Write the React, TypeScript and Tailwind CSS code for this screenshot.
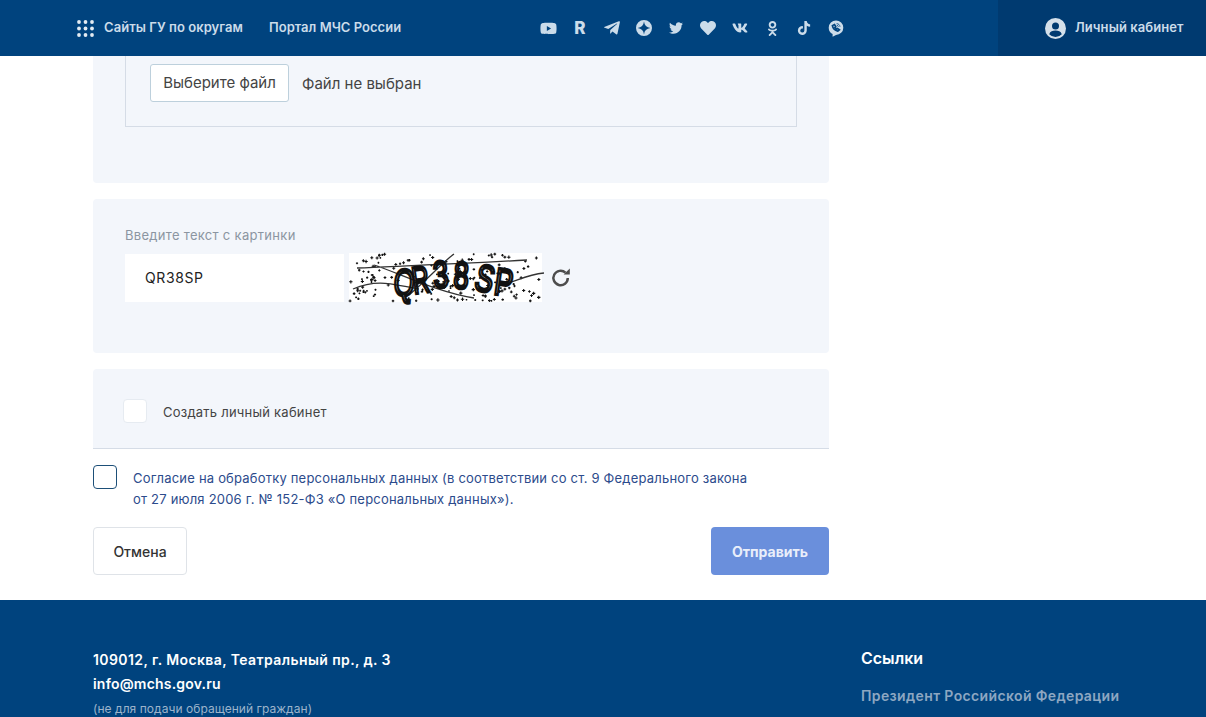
import React from "react";
import { FaYoutube, FaTelegramPlane, FaTwitter, FaHeart, FaVk, FaOdnoklassniki, FaTiktok } from "react-icons/fa";

function Grid() {
  const dots = [];
  for (let r = 0; r < 3; r++) for (let c = 0; c < 3; c++) dots.push(<circle key={`${r}${c}`} cx={2 + c * 6.5} cy={2 + r * 6.5} r={1.9} fill="#e3ebf2" />);
  return <svg width="17" height="17" viewBox="0 0 17 17">{dots}</svg>;
}

function Dzen() {
  return (
    <svg width="16" height="16" viewBox="0 0 16 16">
      <path fillRule="evenodd" fill="currentColor" d="M8 0a8 8 0 1 0 0 16A8 8 0 0 0 8 0Zm0 1.6C8.4 5.4 10.6 7.6 14.4 8 10.6 8.4 8.4 10.6 8 14.4 7.6 10.6 5.4 8.4 1.6 8 5.4 7.6 7.6 5.4 8 1.6Z" />
    </svg>
  );
}

function ViberBubble() {
  return (
    <svg width="16" height="17" viewBox="0 0 16 17">
      <path fill="currentColor" d="M8 .5a7.3 7.3 0 0 1 7.3 7.2A7.3 7.3 0 0 1 8 15l-3.4 1.8V14A7.2 7.2 0 0 1 .7 7.7 7.3 7.3 0 0 1 8 .5Z" />
      <path fill="none" stroke="#00437e" strokeWidth="1.7" d="M4.4 5.6c.5 2.7 2.4 4.8 5.4 5.5l1.6-1.3-1.9-1.3-1 .6-1.5-1.7.7-1-1.2-1.9Z" />
      <path fill="none" stroke="#00437e" strokeWidth="0.8" d="M8.6 3.6c2 .1 3.2 1.3 3.4 3.2M8.8 5.2c.9.1 1.5.7 1.6 1.6" />
    </svg>
  );
}

function Refresh() {
  return (
    <svg width="22" height="22" viewBox="0 0 22 22" fill="none">
      <path d="M17.8 11a7.2 7.2 0 1 1-2.3-5.3" stroke="#4d4d4d" strokeWidth="2.5" />
      <path d="M13.6 7.6h6.2V1.6Z" fill="#4d4d4d" />
    </svg>
  );
}

const letters = [
  { c: "Q", x: 44, y: 42, r: 4, sx: 0.7 },
  { c: "R", x: 65, y: 41, r: -8, sx: 0.62 },
  { c: "3", x: 85, y: 35, r: -4, sx: 0.72 },
  { c: "8", x: 104, y: 35, r: 3, sx: 0.72 },
  { c: "S", x: 124, y: 36, r: 14, sx: 0.72 },
  { c: "P", x: 144, y: 41, r: 8, sx: 0.72 },
];

function Captcha() {
  let seed = 38;
  const rnd = () => {
    seed = (seed * 16807) % 2147483647;
    return seed / 2147483647;
  };
  const noise = [];
  for (let i = 0; i < 175; i++) {
    const x = rnd() * 190 + 1;
    const y = rnd() * 47 + 1;
    const s = 0.8 + rnd() * 0.9;
    noise.push(<path key={i} d={`M${x - s} ${y}H${x + s}M${x} ${y - s}V${y + s}`} stroke="#111" strokeWidth="1.1" />);
  }
  return (
    <svg width="193" height="49" viewBox="0 0 193 49" className="overflow-visible bg-white">
      {noise}
      <path d="M8 15C50 13 90 12 178 7M4 36C30 25 45 32 70 36M25 12C50 20 90 40 125 45M60 42C80 25 95 8 105 1M150 32C165 30 175 22 195 20" stroke="#333" strokeWidth="1.3" fill="none" />
      {letters.map((l) => (
        <text
          key={l.c}
          transform={`translate(${l.x} ${l.y}) rotate(${l.r}) scale(${l.sx} 1)`}
          fontFamily="'Liberation Sans', sans-serif"
          fontSize="38"
          fill="none"
          stroke="#111"
          strokeWidth="3"
        >
          {l.c}
        </text>
      ))}
    </svg>
  );
}

const social = [
  <FaYoutube size={17} />,
  <span className="text-[17px] font-extrabold leading-none">R</span>,
  <FaTelegramPlane size={18} />,
  <Dzen />,
  <FaTwitter size={14} />,
  <FaHeart size={16} />,
  <FaVk size={16} />,
  <FaOdnoklassniki size={15} />,
  <FaTiktok size={14} />,
  <ViberBubble />,
];

export default function App() {
  return (
    <div className="h-[717px] overflow-hidden bg-white font-['Inter','Liberation_Sans',sans-serif] text-[#333]">
      <header className="flex h-14 items-center bg-[#00437e] text-[#cbdcea]">
        <div className="ml-[77px] flex w-[455px] items-center">
          <Grid />
          <span className="ml-[10px] w-[165px] text-[13px] font-semibold tracking-[0.05px]">Сайты ГУ по округам</span>
          <span className="text-[13px] font-semibold tracking-[0.02px]">Портал МЧС России</span>
        </div>
        <div className="flex w-[466px] items-center text-[#cbdcea]">
          {social.map((icon, i) => (
            <span key={i} className="flex w-8 justify-center">{icon}</span>
          ))}
        </div>
        <div className="flex h-14 w-[208px] items-center bg-[#003a70] pl-[47px]">
          <svg width="21" height="21" viewBox="0 0 21 21">
            <circle cx="10.5" cy="10.5" r="10.5" fill="#d5e0ea" />
            <circle cx="10.5" cy="8" r="3.5" fill="#003a70" />
            <path d="M4.2 16.2c1-2.8 3.5-3.6 6.3-3.6s5.3.8 6.3 3.6a8.6 8.6 0 0 1-12.6 0Z" fill="#003a70" />
          </svg>
          <span className="ml-[9px] text-[13px] font-semibold tracking-[0.07px]">Личный кабинет</span>
        </div>
      </header>

      <main className="ml-[93px] w-[736px]">
        <section className="h-[127px] rounded-b bg-[#f3f6fb] px-8">
          <div className="flex h-[71px] items-start border-x border-b border-[#d5dce6] pl-6 pt-2">
            <button className="h-[38px] w-[139px] rounded-[3px] border border-[#bdd0dc] bg-white text-[15px] text-[#444]">Выберите файл</button>
            <span className="ml-[13px] mt-[11px] text-[15px] leading-[18px] text-[#444]">Файл не выбран</span>
          </div>
        </section>

        <section className="mt-4 h-[154px] rounded bg-[#f3f6fb] px-8 pt-[28px]">
          <div className="text-[13px] leading-4 tracking-[0.3px] text-[#8b95a1]">Введите текст с картинки</div>
          <div className="mt-[10px] flex items-center">
            <div className="flex h-12 w-[219px] items-center bg-white pl-5 text-[14px] tracking-[0.6px] text-[#222]">QR38SP</div>
            <div className="ml-[5px]"><Captcha /></div>
            <div className="ml-[8px]"><Refresh /></div>
          </div>
        </section>

        <section className="mt-4 flex h-20 items-center rounded-t border-b border-[#d5dce6] bg-[#f3f6fb] pl-[30px]">
          <span className="mt-[4px] h-6 w-6 rounded-[4px] border border-[#e6ebf1] bg-white" />
          <span className="ml-4 mt-[8px] text-[13px] tracking-[0.23px] text-[#444]">Создать личный кабинет</span>
        </section>

        <div className="mt-4 flex">
          <span className="h-6 w-6 rounded-[4px] border border-[#1d4f78] bg-white" />
          <p className="ml-4 mt-[3px] text-[13px] leading-[21px] tracking-[0.2px] text-[#2c4b8c]">
            Согласие на обработку персональных данных (в соответствии со ст. 9 Федерального закона
            <br />
            от 27 июля 2006 г. № 152-ФЗ «О персональных данных»).
          </p>
        </div>

        <div className="mt-[17px] flex justify-between">
          <button className="h-12 w-[94px] rounded-[4px] border border-[#dfe3e8] bg-white text-[14px] font-medium text-[#333]">Отмена</button>
          <button className="h-12 w-[118px] rounded-[4px] bg-[#6a8fdc] text-[14px] font-bold text-[#e9eefa]">Отправить</button>
        </div>
      </main>

      <footer className="mt-[25px] flex h-[200px] bg-[#00437e] pl-[93px] pt-[50px]">
        <div className="w-[768px]">
          <div className="text-[14px] font-semibold leading-5 tracking-[0.4px] text-white">109012, г. Москва, Театральный пр., д. 3</div>
          <div className="mt-[4px] text-[14px] font-semibold leading-5 tracking-[0.2px] text-white">info@mchs.gov.ru</div>
          <div className="mt-[7px] text-[12px] leading-4 tracking-[0.05px] text-[#9db4cb]">(не для подачи обращений граждан)</div>
        </div>
        <div className="-mt-[2px]">
          <div className="text-[16px] font-semibold leading-5 text-white">Ссылки</div>
          <div className="mt-[18px] text-[14px] font-semibold leading-5 tracking-[0.37px] text-[#8da7c2]">Президент Российской Федерации</div>
        </div>
      </footer>
    </div>
  );
}
